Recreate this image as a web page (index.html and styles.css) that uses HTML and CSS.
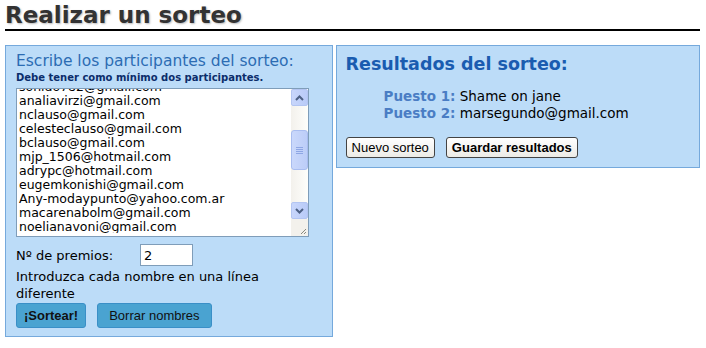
FILE: index.html
```html
<!DOCTYPE html>
<html lang="es">
<head>
  <meta charset="UTF-8">
  <title>Realizar un sorteo</title>
  <link rel="stylesheet" href="styles.css">
</head>
<body>
  <h1 class="titulo">Realizar un sorteo</h1>
  <div class="contenido">
    <div class="panel participantes">
      <h2>Escribe los participantes del sorteo:</h2>
      <p class="aviso">Debe tener como mínimo dos participantes.</p>
      <div class="caja-nombres">
        <textarea id="nombres" class="nombres">martinpaz@gmail.com
lucia.ferro@hotmail.com
gabyroldan@gmail.com
pablito_22@yahoo.com.ar
solemartinez@gmail.com
juanicastro@hotmail.com
sonido782@gmail.com
analiavirzi@gmail.com
nclauso@gmail.com
celesteclauso@gmail.com
bclauso@gmail.com
mjp_1506@hotmail.com
adrypc@hotmail.com
eugemkonishi@gmail.com
Any-modaypunto@yahoo.com.ar
macarenabolm@gmail.com
noelianavoni@gmail.com
flor.aguirre@gmail.com
marsegundo@gmail.com
Shame on jane
caroruiz@hotmail.com
vickyperez@gmail.com
dani_lopez@yahoo.com
mariela.s@gmail.com
tomasgil@hotmail.com
ceci_benitez@gmail.com
anitaross@gmail.com
jorgeluna@hotmail.com
romina_v@gmail.com
laurasosa@gmail.com</textarea>
        <!-- barra de scroll estilo XP, dibujada a mano -->
        <div class="barra">
          <div class="flecha">
            <svg width="9" height="6" viewBox="0 0 9 6"><path d="M1 5 L4.5 1.5 L8 5" fill="none" stroke="#4d6185" stroke-width="2"/></svg>
          </div>
          <div class="pista">
            <div class="pulgar">
              <span></span><span></span><span></span><span></span>
            </div>
          </div>
          <div class="flecha">
            <svg width="9" height="6" viewBox="0 0 9 6"><path d="M1 1 L4.5 4.5 L8 1" fill="none" stroke="#4d6185" stroke-width="2"/></svg>
          </div>
          <div class="esquina">
            <svg width="17" height="17" viewBox="0 0 17 17"><path d="M15 10 L10 15 M15 13 L13 15" stroke="#8a8a80" stroke-width="1"/></svg>
          </div>
        </div>
      </div>
      <div class="premios">
        <label for="premios">Nº de premios:</label>
        <input id="premios" type="text" value="2">
      </div>
      <p class="ayuda">Introduzca cada nombre en una línea diferente</p>
      <div class="acciones">
        <button class="btn-azul fuerte">¡Sortear!</button>
        <button class="btn-azul">Borrar nombres</button>
      </div>
    </div>
    <div class="panel resultados">
      <h2>Resultados del sorteo:</h2>
      <ul class="ganadores">
        <li><span class="puesto">Puesto 1:</span> Shame on jane</li>
        <li><span class="puesto">Puesto 2:</span> marsegundo@gmail.com</li>
      </ul>
      <div class="acciones">
        <button class="btn-gris">Nuevo sorteo</button>
        <button class="btn-gris fuerte">Guardar resultados</button>
      </div>
    </div>
  </div>
  <script>
    // dejar la lista scrolleada como en la captura
    document.getElementById('nombres').scrollTop = 93;
  </script>
</body>
</html>
```

FILE: styles.css
```css
body,
h1,
h2,
p,
ul {
  margin: 0;
  padding: 0;
}

body {
  font-family: "DejaVu Sans", Verdana, sans-serif;
  background: white;
  color: black;
  padding: 0 6px 0 5px;
}

.titulo {
  font-size: 23px;
  font-weight: bold;
  color: #333;
  text-shadow: 1px 1px 2px #bbb;
  padding: 2px 0 1px 0;
  border-bottom: 2px solid black;
  line-height: 26px;
}

.contenido {
  display: flex;
  gap: 3px;
  align-items: flex-start;
  margin-top: 14px;
}

.panel {
  background: #bcdcf8;
  border: 1px solid #75a9dc;
}

.participantes {
  width: 306px;
  padding: 5px 10px 8px 10px;
}

.participantes h2 {
  font-size: 15.5px;
  font-weight: normal;
  color: #2c6cb3;
  line-height: 20px;
}

.aviso {
  font-size: 10px;
  font-weight: bold;
  color: #0b2d6b;
  line-height: 14px;
  margin-bottom: 3px;
}

.caja-nombres {
  display: flex;
  width: 293px;
  height: 149px;
  box-sizing: border-box;
  border: 1px solid #7f9db9;
  background: white;
}

.nombres {
  flex: 1;
  min-width: 0;
  height: 144px;
  box-sizing: border-box;
  border: none;
  outline: none;
  font-family: "DejaVu Sans", Verdana, sans-serif;
  font-size: 12.5px;
  line-height: 14px;
  padding: 0 2px;
  margin: 0;
  resize: none;
  white-space: pre;
  overflow: hidden;
}

.barra {
  width: 17px;
  display: flex;
  flex-direction: column;
  background: linear-gradient(to right, #f3f1ec, #fefefb);
}

.flecha {
  height: 17px;
  box-sizing: border-box;
  background: linear-gradient(to right, #c8d6fb, #b9cbf8);
  border: 1px solid #b3c5f2;
  border-radius: 2px;
  display: flex;
  align-items: center;
  justify-content: center;
}

.pista {
  flex: 1;
  padding-top: 24px;
}

.pulgar {
  height: 40px;
  box-sizing: border-box;
  background: linear-gradient(to right, #cad8fb, #bccdf8);
  border: 1px solid #a9bdf0;
  border-radius: 3px;
  display: flex;
  flex-direction: column;
  align-items: center;
  justify-content: center;
  gap: 1px;
}

.pulgar span {
  width: 7px;
  height: 1px;
  background: #8ea6e4;
}

.esquina {
  height: 17px;
  background: #f3f1ec;
}

.premios {
  display: flex;
  align-items: center;
  margin-top: 7px;
  font-size: 13px;
}

.premios label {
  width: 124px;
}

.premios input {
  width: 53px;
  height: 22px;
  box-sizing: border-box;
  border: 1px solid #7f9db9;
  font-family: "DejaVu Sans", Verdana, sans-serif;
  font-size: 13px;
  padding: 0 3px;
}

.ayuda {
  font-size: 13px;
  line-height: 17px;
  margin-top: 2px;
  width: 280px;
}

.acciones {
  display: flex;
  gap: 11px;
}

.participantes .acciones {
  margin-top: 1px;
}

.btn-azul {
  font-family: "Liberation Sans", Arial, sans-serif;
  font-size: 13px;
  height: 25px;
  padding: 0 11px;
  background: #4aa3d1;
  border: 1px solid #3a8fc7;
  border-radius: 3px;
  color: #111;
}

.fuerte {
  font-weight: bold;
}

.participantes .btn-azul.fuerte {
  padding: 0 7px;
}

.resultados {
  width: 345px;
  height: 106px;
  padding: 7px 9px 8px 9px;
}

.resultados h2 {
  font-size: 17.5px;
  font-weight: bold;
  color: #1a5cb0;
  line-height: 22px;
}

.ganadores {
  list-style: none;
  padding-left: 38px;
  margin-top: 13px;
  font-size: 13.5px;
  line-height: 17px;
}

.puesto {
  font-weight: bold;
  color: #4a7dc4;
}

.resultados .acciones {
  margin-top: 15px;
}

.btn-gris {
  font-family: "Liberation Sans", Arial, sans-serif;
  font-size: 13px;
  height: 21px;
  padding: 0 5px;
  background: linear-gradient(#ffffff, #ecebe6);
  border: 1px solid #444;
  border-radius: 3px;
  color: black;
}
```
